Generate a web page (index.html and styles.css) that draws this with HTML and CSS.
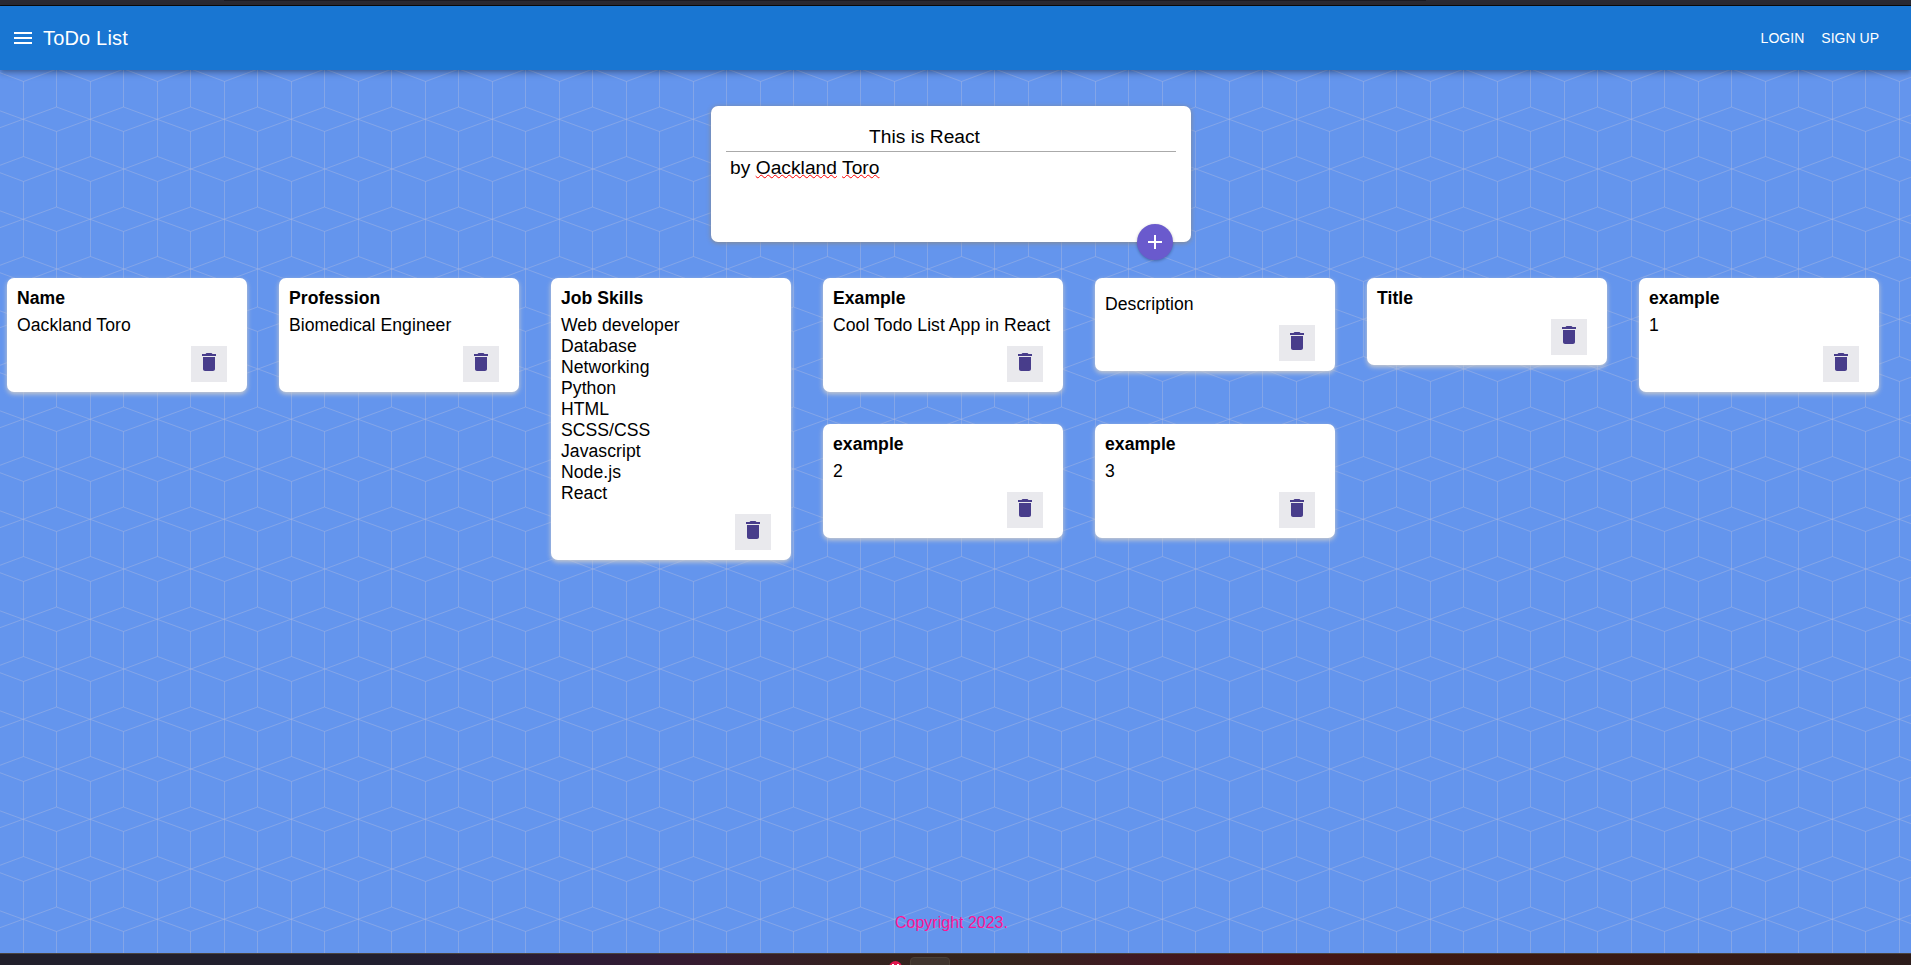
FILE: index.html
```
<!DOCTYPE html>
<html lang="en">
<head>
<meta charset="utf-8">
<title>ToDo List</title>
<link rel="stylesheet" href="styles.css">
</head>
<body>
<svg class="sprite" aria-hidden="true">
  <symbol id="trash" viewBox="0 0 24 24"><path d="M6 19c0 1.1.9 2 2 2h8c1.1 0 2-.9 2-2V7H6v12zM19 4h-3.5l-1-1h-5l-1 1H5v2h14V4z"/></symbol>
</svg>
<div class="browser-edge"><div class="browser-tabs"></div></div>
<header class="appbar">
  <svg class="menu" viewBox="0 0 24 24"><path d="M3 18h18v-2H3v2zm0-5h18v-2H3v2zm0-7v2h18V6H3z"/></svg>
  <h6 class="brand">ToDo List</h6>
  <nav class="links"><a>LOGIN</a><a>SIGN UP</a></nav>
</header>
<main class="page">
  <form class="create">
    <div class="create-title">This is React</div>
    <div class="create-body">by <span class="typo">Oackland</span> <span class="typo">Toro</span></div>
    <button class="fab" type="button"><svg viewBox="0 0 24 24"><path d="M19 13h-6v6h-2v-6H5v-2h6V5h2v6h6v2z"/></svg></button>
  </form>
  <section class="notes">
    <article class="note"><h1>Name</h1><p>Oackland Toro</p><button class="del"><svg><use href="#trash"/></svg></button></article>
    <article class="note"><h1>Profession</h1><p>Biomedical Engineer</p><button class="del"><svg><use href="#trash"/></svg></button></article>
    <article class="note"><h1>Job Skills</h1><p>Web developer
Database
Networking
Python
HTML
SCSS/CSS
Javascript
Node.js
React</p><button class="del"><svg><use href="#trash"/></svg></button></article>
    <article class="note"><h1>Example</h1><p>Cool Todo List App in React</p><button class="del"><svg><use href="#trash"/></svg></button></article>
    <article class="note"><h1></h1><p>Description</p><button class="del"><svg><use href="#trash"/></svg></button></article>
    <article class="note"><h1>Title</h1><p></p><button class="del"><svg><use href="#trash"/></svg></button></article>
    <article class="note"><h1>example</h1><p>1</p><button class="del"><svg><use href="#trash"/></svg></button></article>
    <article class="note"><h1>example</h1><p>2</p><button class="del"><svg><use href="#trash"/></svg></button></article>
    <article class="note"><h1>example</h1><p>3</p><button class="del"><svg><use href="#trash"/></svg></button></article>
  </section>
  <footer class="footer">Copyright 2023.</footer>
</main>
<div class="taskbar"><svg class="task-icon" viewBox="0 0 13 13"><circle cx="6.5" cy="6.5" r="6.5" fill="#e0184f"/><path d="M3 3h2v2H3zM8 3h2v2H8z" fill="#fff"/></svg><span class="task-tab"></span></div>
</body>
</html>
```
FILE: styles.css
```
* { box-sizing: border-box; margin: 0; padding: 0; }
body {
  height: 965px;
  display: flex;
  flex-direction: column;
  overflow: hidden;
  font-family: "Liberation Sans", Arial, sans-serif;
  font-size: 16px;
  background: #6495ed url("data:image/svg+xml,%3Csvg xmlns='http://www.w3.org/2000/svg' width='67' height='100'%3E%3Cpath d='M23.5 81.5V100M23.5 0V56.5M56.5 31.5V100M56.5 0V7M-10.5 7L56.5 31.5L90.5 19M-10.5 31.5L56.5 7L90.5 19.4M-43.5 56.5L23.5 81.5L90.5 56.5M-43.5 81.5L23.5 56.5L90.5 81.5' fill='none' stroke='%23a9b9e2' stroke-opacity='.45'/%3E%3C/svg%3E");
}
.sprite { display: none; }
.browser-edge {
  flex: none;
  height: 6px;
  background: #2b2a33;
  border-bottom: 1px solid #0c0c0d;
}
.browser-tabs { height: 1px; margin: 0 485px 0 224px; background: #1c1b22; }

.appbar {
  flex: none;
  height: 64px;
  padding: 0 32px 0 11px;
  display: flex;
  align-items: center;
  color: #fff;
  background: #1976d2;
  box-shadow: 0 2px 4px -1px rgba(0,0,0,.2), 0 4px 5px rgba(0,0,0,.14), 0 1px 10px rgba(0,0,0,.12);
}
.menu { width: 24px; height: 24px; fill: #fff; }
.brand {
  margin-left: 8px;
  font-size: 20px;
  font-weight: 400;
  line-height: 32px;
  letter-spacing: .17px;
}
.links { margin-left: auto; display: flex; gap: 17px; font-size: 14px; letter-spacing: .02px; }

.page { flex: 1; display: flex; flex-direction: column; }
.create {
  position: relative;
  flex: none;
  width: 480px;
  height: 136px;
  margin: 36px 0 20px 711px;
  padding: 15px;
  background: #fff;
  border-radius: 7px;
  box-shadow: 0 1px 5px rgb(138,137,137);
  font-size: 19.2px;
}
.create-title {
  height: 31px;
  padding: 5px 53px 3px 0;
  line-height: 22px;
  text-align: center;
  border-bottom: 1px solid #aaa;
}
.create-body { padding: 5px 4px; line-height: 22px; letter-spacing: .03px; }
.typo {
  text-decoration: underline wavy red 1.4px;
  text-decoration-skip-ink: none;
  text-underline-offset: 0;
}
.fab {
  position: absolute;
  right: 18px;
  bottom: -18px;
  width: 36px;
  height: 36px;
  padding: 6px;
  border: 0;
  border-radius: 50%;
  background: #6a5acd;
  box-shadow: 0 1px 3px rgba(0,0,0,.3);
}
.fab svg { display: block; width: 24px; height: 24px; fill: #fff; }

.notes { flex: none; margin-left: -9px; }
.note {
  float: left;
  width: 240px;
  margin: 16px;
  padding: 10px;
  background: #fff;
  border-radius: 7px;
  box-shadow: 0 2px 5px #ccc;
}
.note h1 { margin-bottom: 6px; font-size: 17.6px; line-height: 21px; letter-spacing: .03px; }
.note p {
  margin-bottom: 10px;
  font-size: 17.6px;
  line-height: 21px;
  letter-spacing: .05px;
  white-space: pre;
}
.del {
  float: right;
  width: 36px;
  height: 36px;
  margin-right: 10px;
  border: 0;
  background: #e9e9ed;
}
.del svg { display: block; width: 24px; height: 24px; margin: -4px auto 0; fill: #483d8b; }

.footer { margin-top: auto; padding: 0 0 21px 895px; line-height: 18px; color: #ff1493; }

.taskbar {
  flex: none;
  height: 12px;
  overflow: hidden;
  display: flex;
  align-items: flex-start;
  padding-left: 889px;
  border-top: 1px solid #4a4441;
  background: linear-gradient(90deg, #211f2b 0, #211f2f 380px, #2c1b35 570px, #361b30 700px, #34211f 850px, #33251c 1000px, #3f1922 1130px, #481516 1280px, #3d1811 1430px, #371a14 1700px, #2c1c1b 1911px);
}
.task-icon { flex: none; width: 13px; height: 13px; margin-top: 7px; }
.task-tab {
  width: 40px;
  height: 20px;
  margin: 3px 0 0 8px;
  border: 1px solid #4b4036;
  border-radius: 4px;
  background: #3f342d;
}
```
